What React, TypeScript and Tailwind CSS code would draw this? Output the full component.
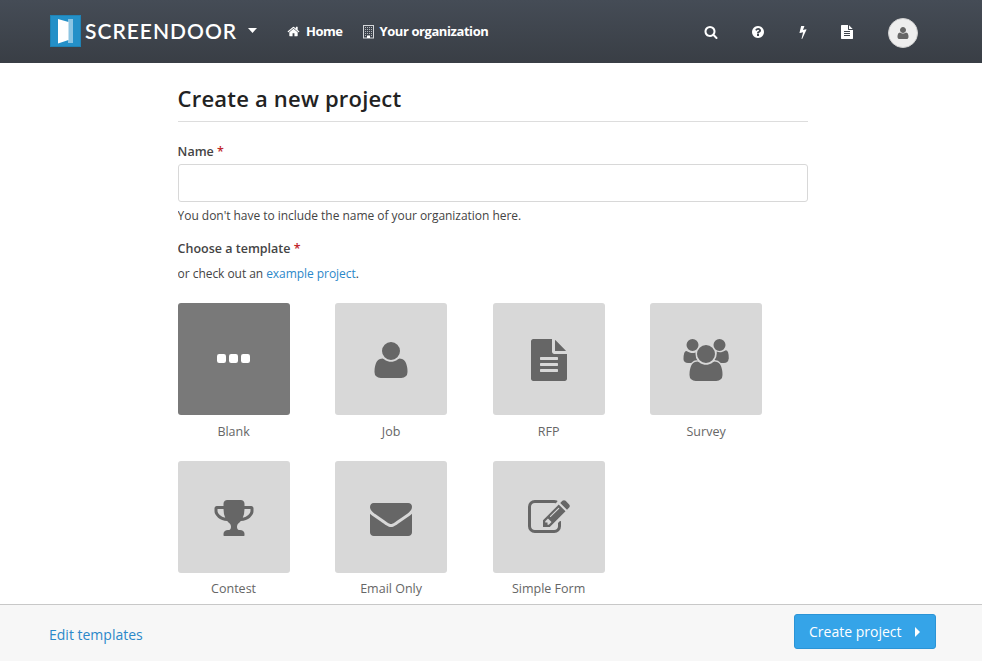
import type { ReactNode } from "react";

const paths = {
  user: "M1600 1405q0 120-73 189.5t-194 69.5h-874q-121 0-194-69.5t-73-189.5q0-53 3.5-103.5t14-109 26.5-108.5 43-97.5 62-81 85.5-53.5 111.5-20q9 0 42 21.5t74.5 48 108 48 133.5 21.5 133.5-21.5 108-48 74.5-48 42-21.5q61 0 111.5 20t85.5 53.5 62 81 43 97.5 26.5 108.5 14 109 3.5 103.5zm-320-893q0 159-112.5 271.5t-271.5 112.5-271.5-112.5-112.5-271.5 112.5-271.5 271.5-112.5 271.5 112.5 112.5 271.5z",
  file: "M1596 476q14 14 28 36h-472v-472q22 14 36 28zm-476 164h544v1056q0 40-28 68t-68 28h-1344q-40 0-68-28t-28-68v-1600q0-40 28-68t68-28h800v544q0 40 28 68t68 28zm160 736v-64q0-14-9-23t-23-9h-704q-14 0-23 9t-9 23v64q0 14 9 23t23 9h704q14 0 23-9t9-23zm0-256v-64q0-14-9-23t-23-9h-704q-14 0-23 9t-9 23v64q0 14 9 23t23 9h704q14 0 23-9t9-23zm0-256v-64q0-14-9-23t-23-9h-704q-14 0-23 9t-9 23v64q0 14 9 23t23 9h704q14 0 23-9t9-23z",
  search:
    "M1216 832q0-185-131.5-316.5t-316.5-131.5-316.5 131.5-131.5 316.5 131.5 316.5 316.5 131.5 316.5-131.5 131.5-316.5zm512 832q0 52-38 90t-90 38q-54 0-90-38l-343-342q-179 124-399 124-143 0-273.5-55.5t-225-150-150-225-55.5-273.5 55.5-273.5 150-225 225-150 273.5-55.5 273.5 55.5 225 150 150 225 55.5 273.5q0 220-124 399l343 343q37 37 37 90z",
  help: "M1024 1376v-192q0-14-9-23t-23-9h-192q-14 0-23 9t-9 23v192q0 14 9 23t23 9h192q14 0 23-9t9-23zm256-672q0-88-55.5-163t-138.5-116-170-41q-243 0-371 213-15 24 8 42l132 100q7 6 19 6 16 0 25-12 53-68 86-92 34-24 86-24 48 0 85.5 26t37.5 59q0 38-20 61t-68 45q-63 28-115.5 86.5t-52.5 125.5v36q0 14 9 23t23 9h192q14 0 23-9t9-23q0-19 21.5-49.5t54.5-49.5q32-18 49-28.5t46-35 44.5-48 28-60.5 12.5-81zm384 192q0 209-103 385.5t-279.5 279.5-385.5 103-385.5-103-279.5-279.5-103-385.5 103-385.5 279.5-279.5 385.5-103 385.5 103 279.5 279.5 103 385.5z",
  bolt: "M1333 566q18 20 7 44l-540 1157q-13 25-42 25-4 0-14-2-17-5-25.5-19t-4.5-30l197-808-406 101q-4 1-12 1-18 0-31-11-18-15-13-39l201-825q4-14 16-23t28-9h328q19 0 32 12.5t13 29.5q0 8-5 18l-171 463 396-98q8-2 12-2 19 0 34 15z",
  home: "M1472 992v480q0 26-19 45t-45 19h-384v-384h-256v384h-384q-26 0-45-19t-19-45v-480q0-1 .5-3t.5-3l575-474 575 474q1 2 1 6zm223-69l-62 74q-8 9-21 11h-3q-13 0-21-7l-692-577-692 577q-12 8-24 7-13-2-21-11l-62-74q-8-10-7-23.5t11-21.5l719-599q32-26 76-26t76 26l244 204v-195q0-14 9-23t23-9h192q14 0 23 9t9 23v408l219 182q10 8 11 21.5t-7 23.5z",
  trophy:
    "M522 883q-74-162-74-371h-256v96q0 78 94.5 162t235.5 113zm1078-275v-96h-256q0 209-74 371 141-29 235.5-113t94.5-162zm128-128v128q0 71-41.5 143t-112 130-173 97.5-215.5 44.5q-42 54-95 95-38 34-52.5 72.5t-14.5 89.5q0 54 30.5 91t97.5 37q75 0 133.5 45.5t58.5 114.5v64q0 14-9 23t-23 9h-832q-14 0-23-9t-9-23v-64q0-69 58.5-114.5t133.5-45.5q67 0 97.5-37t30.5-91q0-51-14.5-89.5t-52.5-72.5q-53-41-95-95-113-5-215.5-44.5t-173-97.5-112-130-41.5-143v-128q0-40 28-68t68-28h288v-96q0-66 47-113t113-47h576q66 0 113 47t47 113v96h288q40 0 68 28t28 68z",
  envelope:
    "M1792 710v794q0 66-47 113t-113 47h-1472q-66 0-113-47t-47-113v-794q44 49 101 87 362 246 497 345 57 42 92.5 65.5t94.5 48 110 24.5h2q51 0 110-24.5t94.5-48 92.5-65.5q170-123 498-345 57-39 100-87zm0-294q0 79-49 151t-122 123q-376 261-468 325-10 7-42.5 31t-54 38.5-52 32.5-57.5 27-50 9h-2q-23 0-50-9t-57.5-27-52-32.5-54-38.5-42.5-31q-91-64-262-182.5t-205-142.5q-62-42-117-115.5t-55-136.5q0-78 41.5-130t118.5-52h1472q65 0 112.5 47t47.5 113z",
  edit: "M888 1184l116-116-152-152-116 116v56h96v96h56zm440-720q-16-16-33 1l-350 350q-17 17-1 33t33-1l350-350q17-17 1-33zm80 594v190q0 119-84.5 203.5t-203.5 84.5h-832q-119 0-203.5-84.5t-84.5-203.5v-832q0-119 84.5-203.5t203.5-84.5h832q63 0 117 25 15 7 18 23 3 17-9 29l-49 49q-14 14-32 8-23-6-45-6h-832q-66 0-113 47t-47 113v832q0 66 47 113t113 47h832q66 0 113-47t47-113v-126q0-13 9-22l64-64q15-15 35-7t20 29zm-96-738l288 288-672 672h-288v-288zm444 132l-92 92-288-288 92-92q28-28 68-28t68 28l152 152q28 28 28 68t-28 68z",
  users:
    "M657 896q-162 5-265 128h-134q-82 0-138-40.5t-56-118.5q0-353 124-353 6 0 43.5 21t97.5 42.5 119 21.5q67 0 133-23-5 37-5 66 0 159 93 292zm1071 637q0 120-73 189.5t-194 69.5h-874q-121 0-194-69.5t-73-189.5q0-53 3.5-103.5t14-109 26.5-108.5 43-97.5 62-81 85.5-53.5 111.5-20q10 0 43 21.5t73 48 107 48 135 21.5 135-21.5 107-48 73-48 43-21.5q61 0 111.5 20t85.5 53.5 62 81 43 97.5 26.5 108.5 14 109 3.5 103.5zm-1024-1277q0 106-75 181t-181 75-181-75-75-181 75-181 181-75 181 75 75 181zm704 384q0 159-112.5 271.5t-271.5 112.5-271.5-112.5-112.5-271.5 112.5-271.5 271.5-112.5 271.5 112.5 112.5 271.5zm576 225q0 78-56 118.5t-138 40.5h-134q-103-123-265-128 93-133 93-292 0-29-5-66 66 23 133 23 59 0 119-21.5t97.5-42.5 43.5-21q124 0 124 353zm-128-609q0 106-75 181t-181 75-181-75-75-181 75-181 181-75 181 75 75 181z",
};

type IconName = keyof typeof paths;

function Icon({ name, className }: { name: IconName; className: string }) {
  return (
    <svg
      viewBox={name === "users" ? "0 0 2048 1792" : "0 0 1792 1792"}
      fill="currentColor"
      className={`shrink-0 ${className}`}
    >
      <path d={paths[name]} />
    </svg>
  );
}

function Dots() {
  return (
    <svg viewBox="0 0 33 42" fill="currentColor" className="mr-px h-[42px] w-[33px]">
      <rect x="0" y="15" width="9" height="9" rx="2.2" />
      <rect x="12" y="15" width="9" height="9" rx="2.2" />
      <rect x="24" y="15" width="9" height="9" rx="2.2" />
    </svg>
  );
}

function Building() {
  return (
    <svg viewBox="0 0 11 14" className="h-[14px] w-[11px] shrink-0">
      <rect x="0.5" y="0.5" width="10" height="12.5" fill="none" stroke="#d5d7da" />
      <g fill="#b4b8bd">
        {[2, 4, 6, 8].map((y) =>
          [2, 4, 6, 8].map((x) => <rect key={`${x}-${y}`} x={x} y={y} width="1" height="1" />)
        )}
        <rect x="2" y="10" width="1" height="1" />
        <rect x="8" y="10" width="1" height="1" />
      </g>
      <rect x="4" y="10.5" width="3" height="2.5" fill="#fff" />
    </svg>
  );
}

function Tile({ label, selected, children }: { label: string; selected?: boolean; children: ReactNode }) {
  return (
    <div className="h-[157.5px] w-[112px]">
      <div
        className={`flex h-[112px] justify-center rounded-[3px] pt-9 ${
          selected ? "bg-[#797979] text-white" : "bg-[#d8d8d8] text-[#666]"
        }`}
      >
        {children}
      </div>
      <div className="pt-[6.8px] text-center text-[12.5px] leading-[20px] text-[#666]">{label}</div>
    </div>
  );
}

const big = "h-[42px] w-[42px]";

export default function App() {
  return (
    <div className="flex h-[661px] w-[982px] flex-col overflow-hidden bg-white font-['Open_Sans',sans-serif] text-[#444]">
      <header className="flex h-[63px] shrink-0 items-center bg-linear-to-b from-[#454c56] to-[#393e45] pl-[50px] text-white">
        <svg viewBox="0 0 31 32" className="mb-px h-8 w-[31px]">
          <rect width="31" height="32" fill="#2490c8" />
          <rect x="0.5" y="0.5" width="30" height="31" fill="none" stroke="#1f83b6" />
          <rect x="18" y="4" width="5" height="24" fill="#8cc5e3" />
          <path d="M8 4 L18.5 7 V25 L8 28.500Z" fill="#fff" />
        </svg>
        <span className="mb-px ml-[4px] w-[152px] whitespace-nowrap font-['Lato',sans-serif] text-[21px] leading-[32px] font-semibold tracking-[1px]">
          SCREENDOOR
        </span>
        <svg viewBox="0 0 9 5" className="mb-[2px] ml-[11px] h-[5px] w-[9px]" fill="#fff">
          <path d="M0 0H9L4.500 5Z" />
        </svg>
        <nav className="ml-[30px] flex items-center text-[13px] font-bold">
          <a className="flex items-center">
            <Icon name="home" className="h-[13px] w-[13px]" />
            <span className="ml-[6px] w-[36px] tracking-[-0.5px]">Home</span>
          </a>
          <a className="ml-[21px] flex items-center">
            <Building />
            <span className="ml-[5.5px] whitespace-nowrap tracking-[-0.42px]">Your organization</span>
          </a>
        </nav>
        <div className="ml-auto flex items-center pr-[64px]">
          <Icon name="search" className="h-[14px] w-[14px]" />
          <Icon name="help" className="ml-[33px] h-[14px] w-[14px]" />
          <Icon name="bolt" className="ml-[31px] h-[14px] w-[14px]" />
          <Icon name="file" className="mr-px ml-[30px] h-[14px] w-[14px]" />
          <span className="mt-[2px] ml-[33px] flex h-[30px] w-[30px] items-center justify-center rounded-full border border-[#d0d0d0] bg-[#eee] text-[#666]">
            <Icon name="user" className="h-[14px] w-[14px]" />
          </span>
        </div>
      </header>

      <main className="ml-[177.6px] flex h-[541px] w-[630px] shrink-0 flex-col overflow-hidden">
        <h1 className="h-[59px] shrink-0 border-b border-[#ddd] pt-[19px] text-[22px] leading-[32px] font-semibold tracking-[0.2px] text-[#222]">
          Create a new project
        </h1>
        <label className="mt-[20px] text-[12.5px] leading-[20px] font-semibold">
          Name <span className="text-[#c1272d]">*</span>
        </label>
        <input className="mt-[2px] h-[38px] w-full shrink-0 rounded-[3px] border border-[#d8d8d8] bg-white" />
        <p className="mt-[4px] text-[12px] leading-[20px] tracking-[-0.04px]">
          You don't have to include the name of your organization here.
        </p>
        <div className="mt-[13px] text-[12.5px] leading-[20px] font-semibold">
          Choose a template <span className="text-[#c1272d]">*</span>
        </div>
        <p className="mt-[5px] text-[12px] leading-[20px] tracking-[-0.05px]">
          or check out an <a className="text-[#2b88c9]">example project</a>.
        </p>
        <div className="mt-[19px] grid shrink-0 grid-cols-4">
          <Tile label="Blank" selected>
            <Dots />
          </Tile>
          <Tile label="Job">
            <Icon name="user" className={big} />
          </Tile>
          <Tile label="RFP">
            <Icon name="file" className={big} />
          </Tile>
          <Tile label="Survey">
            <Icon name="users" className="h-[42px] w-[48px]" />
          </Tile>
          <Tile label="Contest">
            <Icon name="trophy" className={big} />
          </Tile>
          <Tile label="Email Only">
            <Icon name="envelope" className={big} />
          </Tile>
          <Tile label="Simple Form">
            <Icon name="edit" className={big} />
          </Tile>
        </div>
      </main>

      <footer className="flex h-[57px] shrink-0 items-start justify-between border-t border-[#c8c8c8] bg-[#f7f7f7] pr-[46px] pl-[49px]">
        <a className="mt-[20px] text-[14px] leading-[20px] text-[#2b88c9]">Edit templates</a>
        <button className="mt-[9px] flex h-[35px] w-[142px] items-center rounded-[3px] border border-[#2b94d6] bg-[#35a4e8] pl-[14px] text-[14px] text-white">
          Create project
          <svg viewBox="0 0 5 10" className="ml-[14px] h-[10px] w-[5px]" fill="#fff">
            <path d="M0 0L5 5L0 10Z" />
          </svg>
        </button>
      </footer>
    </div>
  );
}
